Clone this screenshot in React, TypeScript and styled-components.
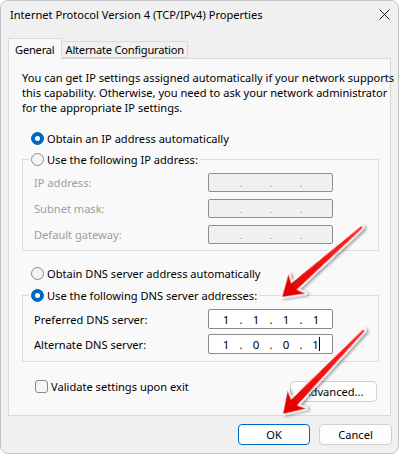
import React from "react";
import styled, { createGlobalStyle } from "styled-components";

const GlobalStyle = createGlobalStyle`
  html, body { margin: 0; padding: 0; background: #ffffff; }
  body {
    font-family: "Noto Sans", "Liberation Sans", sans-serif;
    font-size: 11.1px;
    color: #000000;
  }
  * { box-sizing: border-box; }
`;

const Stage = styled.div`
  position: relative;
  width: 400px;
  height: 455px;
`;

const Window = styled.div`
  width: 399px;
  height: 454px;
  background: #f0f0f0;
  border: 1px solid #c4c4c4;
  border-radius: 8px;
  display: flex;
  flex-direction: column;
  overflow: hidden;
`;

const TitleBar = styled.div`
  height: 27px;
  display: flex;
  align-items: center;
  justify-content: space-between;
  padding: 0 8px 0 9px;
`;

const Title = styled.span`
  font-size: 11.1px;
  color: #000;
`;

const CloseIcon = styled.svg`
  width: 11px;
  height: 11px;
  display: block;
`;

const TabStrip = styled.div`
  margin-top: 10px;
  height: 20px;
  display: flex;
  align-items: flex-end;
  padding-left: 7px;
`;

const Tab = styled.div<{ $active?: boolean }>`
  position: relative;
  z-index: ${(p) => (p.$active ? 2 : 1)};
  height: ${(p) => (p.$active ? "21px" : "17px")};
  margin-bottom: ${(p) => (p.$active ? "-1px" : "0")};
  margin-left: ${(p) => (p.$active ? "0" : "-1px")};
  padding: ${(p) => (p.$active ? "0 6px 0 6px" : "0 3px 0 4px")};
  letter-spacing: -0.2px;
  background: ${(p) => (p.$active ? "#f9f9f9" : "#f0f0f0")};
  border: 1px solid #d9d9d9;
  border-bottom: ${(p) => (p.$active ? "none" : "1px solid #d9d9d9")};
  display: flex;
  align-items: center;
  white-space: nowrap;
`;

const Panel = styled.div`
  margin: 0 7px 0 7px;
  height: 358px;
  background: #f9f9f9;
  border: 1px solid #d9d9d9;
  padding: 11px 11px 0 13px;
  display: flex;
  flex-direction: column;
`;

const Intro = styled.p`
  margin: 0;
  line-height: 15px;
  white-space: nowrap;
`;

const RadioRow = styled.label<{ $mt?: number }>`
  display: flex;
  align-items: center;
  gap: 3px;
  height: 16px;
  margin-left: 9px;
  margin-top: ${(p) => p.$mt ?? 0}px;
`;

const RadioDot = styled.span<{ $checked?: boolean }>`
  width: 13px;
  height: 13px;
  border-radius: 50%;
  flex: none;
  display: flex;
  align-items: center;
  justify-content: center;
  background: ${(p) => (p.$checked ? "#0067c0" : "#f5f5f5")};
  border: 1px solid ${(p) => (p.$checked ? "#0067c0" : "#8a8a8a")};
  &::after {
    content: "";
    display: ${(p) => (p.$checked ? "block" : "none")};
    width: 5px;
    height: 5px;
    border-radius: 50%;
    background: #ffffff;
  }
`;

const Group = styled.fieldset<{ $mt?: number }>`
  margin: ${(p) => p.$mt ?? 0}px 0 0 0;
  padding: 0;
  border: 1px solid #dcdcdc;
  min-width: 0;
`;

const GroupLegend = styled.legend`
  margin-left: 7px;
  padding: 0 2px 0 1px;
  height: 16px;
  display: flex;
  align-items: center;
  gap: 3px;
`;

const FieldGrid = styled.div<{ $gap: number; $pb: number }>`
  display: grid;
  grid-template-columns: 174px 125px;
  row-gap: ${(p) => p.$gap}px;
  padding: 6px 0 ${(p) => p.$pb}px 11px;
  align-items: center;
`;

const FieldLabel = styled.span<{ $disabled?: boolean }>`
  color: ${(p) => (p.$disabled ? "#9d9d9d" : "#000")};
`;

const IpBox = styled.div<{ $disabled?: boolean; $h: number }>`
  height: ${(p) => p.$h}px;
  border: 1px solid ${(p) => (p.$disabled ? "#8f8f8f" : "#8a8a8a")};
  border-radius: 2px;
  background: ${(p) => (p.$disabled ? "#f0f0f0" : "#ffffff")};
  display: flex;
  align-items: center;
  padding-left: 5px;
  font-size: 11.5px;
`;

const Octet = styled.span`
  width: 24px;
  display: inline-flex;
  justify-content: center;
  align-items: center;
`;

const Dot = styled.span<{ $disabled?: boolean }>`
  width: 6px;
  text-align: center;
  color: ${(p) => (p.$disabled ? "#8a8a8a" : "#000")};
  font-size: ${(p) => (p.$disabled ? "9px" : "11.5px")};
  position: relative;
  top: ${(p) => (p.$disabled ? "1px" : "0")};
`;

const Caret = styled.span`
  width: 1px;
  height: 14px;
  background: #000;
`;

const BottomRow = styled.div`
  margin-top: 18px;
  display: flex;
  align-items: flex-start;
  justify-content: space-between;
`;

const CheckRow = styled.label`
  display: flex;
  align-items: center;
  gap: 3px;
  margin-left: 13px;
  height: 13px;
`;

const CheckBox = styled.span`
  width: 13px;
  height: 13px;
  border: 1px solid #8a8a8a;
  border-radius: 3px;
  background: #f5f5f5;
  flex: none;
`;

const Button = styled.button<{ $w: number; $primary?: boolean; $mt?: number; $mr?: number }>`
  width: ${(p) => p.$w}px;
  height: 21px;
  margin-top: ${(p) => p.$mt ?? 0}px;
  margin-right: ${(p) => p.$mr ?? 0}px;
  padding: 0;
  font-family: inherit;
  font-size: 11.1px;
  color: #000;
  background: #fdfdfd;
  border: 1px solid ${(p) => (p.$primary ? "#0067c0" : "#d0d0d0")};
  border-radius: 4px;
`;

const Footer = styled.div`
  display: flex;
  justify-content: flex-end;
  gap: 9px;
  padding: 8px 6px 0 0;
`;

const ArrowLayer = styled.svg`
  position: absolute;
  left: 0;
  top: 0;
  width: 400px;
  height: 455px;
  pointer-events: none;
`;

function IpField({
  values,
  disabled,
  h,
  caret,
}: {
  values: string[];
  disabled?: boolean;
  h: number;
  caret?: boolean;
}) {
  return (
    <IpBox $disabled={disabled} $h={h}>
      {values.map((v, i) => (
        <React.Fragment key={i}>
          {i > 0 && <Dot $disabled={disabled}>.</Dot>}
          <Octet>
            {v}
            {caret && i === values.length - 1 && <Caret />}
          </Octet>
        </React.Fragment>
      ))}
    </IpBox>
  );
}

function Arrow({ x, y, angle, len }: { x: number; y: number; angle: number; len: number }) {
  const pts = `0,0 20,-13 16,-4.3 ${len},-1.2 ${len + 1},0 ${len},1.2 16,4.3 20,13`;
  return (
    <g transform={`translate(${x} ${y}) rotate(${angle})`}>
      <polygon
        points={pts}
        fill="url(#redgrad)"
        stroke="#ffffff"
        strokeWidth={3}
        strokeLinejoin="round"
        paintOrder="stroke"
        filter="url(#shadow)"
      />
    </g>
  );
}

export default function App() {
  const empty = ["", "", "", ""];
  return (
    <Stage>
      <GlobalStyle />
      <Window>
        <TitleBar>
          <Title>Internet Protocol Version 4 (TCP/IPv4) Properties</Title>
          <CloseIcon viewBox="0 0 11 11">
            <path d="M0.5 0.5 L10.5 10.5 M10.5 0.5 L0.5 10.5" stroke="#1b1b1b" strokeWidth="1" />
          </CloseIcon>
        </TitleBar>
        <TabStrip>
          <Tab $active>General</Tab>
          <Tab>Alternate Configuration</Tab>
        </TabStrip>
        <Panel>
          <Intro>
            You can get IP settings assigned automatically if your network supports
            <br />
            this capability. Otherwise, you need to ask your network administrator
            <br />
            for the appropriate IP settings.
          </Intro>
          <RadioRow $mt={15}>
            <RadioDot $checked />
            Obtain an IP address automatically
          </RadioRow>
          <Group $mt={5}>
            <GroupLegend>
              <RadioDot />
              Use the following IP address:
            </GroupLegend>
            <FieldGrid $gap={7} $pb={6}>
              <FieldLabel $disabled>IP address:</FieldLabel>
              <IpField values={empty} disabled h={19} />
              <FieldLabel $disabled>Subnet mask:</FieldLabel>
              <IpField values={empty} disabled h={19} />
              <FieldLabel $disabled>Default gateway:</FieldLabel>
              <IpField values={empty} disabled h={19} />
            </FieldGrid>
          </Group>
          <RadioRow $mt={14}>
            <RadioDot />
            Obtain DNS server address automatically
          </RadioRow>
          <Group $mt={6}>
            <GroupLegend>
              <RadioDot $checked />
              Use the following DNS server addresses:
            </GroupLegend>
            <FieldGrid $gap={5} $pb={7}>
              <FieldLabel>Preferred DNS server:</FieldLabel>
              <IpField values={["1", "1", "1", "1"]} h={20} />
              <FieldLabel>Alternate DNS server:</FieldLabel>
              <IpField values={["1", "0", "0", "1"]} h={20} caret />
            </FieldGrid>
          </Group>
          <BottomRow>
            <CheckRow>
              <CheckBox />
              Validate settings upon exit
            </CheckRow>
            <Button $w={87} $mt={1} $mr={2}>
              Advanced...
            </Button>
          </BottomRow>
        </Panel>
        <Footer>
          <Button $w={72} $primary>
            OK
          </Button>
          <Button $w={73}>Cancel</Button>
        </Footer>
      </Window>
      <ArrowLayer viewBox="0 0 400 455">
        <defs>
          <linearGradient id="redgrad" x1="0" y1="0" x2="1" y2="0">
            <stop offset="0" stopColor="#e00000" />
            <stop offset="1" stopColor="#ff2a2a" />
          </linearGradient>
          <filter id="shadow" x="-20%" y="-50%" width="140%" height="200%">
            <feDropShadow dx="1" dy="2" stdDeviation="1.6" floodColor="#000" floodOpacity="0.45" />
          </filter>
        </defs>
        <Arrow x={282} y={297} angle={-41.2} len={106} />
        <Arrow x={283} y={414} angle={-46} len={116} />
      </ArrowLayer>
    </Stage>
  );
}
